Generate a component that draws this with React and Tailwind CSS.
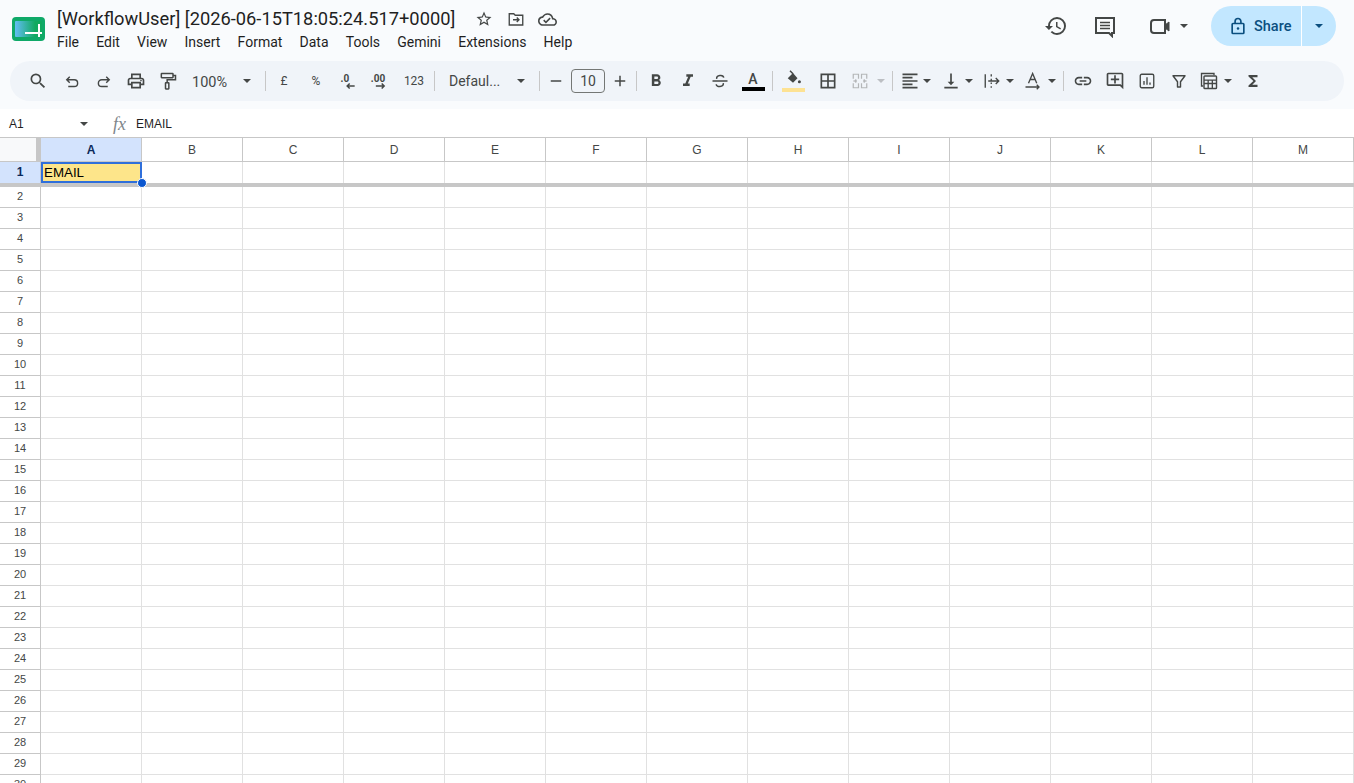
import {
  MdSearch, MdOutlinePrint, MdHistory, MdStarBorder, MdOutlineCloudDone,
  MdFormatBold, MdFormatItalic, MdBorderAll, MdFormatAlignLeft,
  MdVerticalAlignBottom, MdLink, MdOutlineAddComment, MdFunctions, MdAdd, MdRemove,
} from 'react-icons/md';

const menus = ['File', 'Edit', 'View', 'Insert', 'Format', 'Data', 'Tools', 'Gemini', 'Extensions', 'Help'];
const columns = ['A', 'B', 'C', 'D', 'E', 'F', 'G', 'H', 'I', 'J', 'K', 'L', 'M'];
const rows = Array.from({ length: 29 }, (_, i) => i + 2);

function Svg({ children, className = 'w-5 h-5 text-[#444746]' }) {
  return (
    <svg viewBox="0 0 24 24" fill="none" stroke="currentColor" strokeWidth="2" className={className}>
      {children}
    </svg>
  );
}

function Btn({ children, className = 'w-8' }) {
  return <div className={`h-8 flex items-center justify-center shrink-0 text-[#444746] ${className}`}>{children}</div>;
}

function Caret({ className = 'w-[18px]', color = 'border-t-[#444746]' }) {
  return (
    <div className={`h-8 flex items-center justify-center shrink-0 ${className}`}>
      <div className={`w-0 h-0 border-x-[4px] border-x-transparent border-t-[4px] ${color}`} />
    </div>
  );
}

function Sep({ className = '' }) {
  return <div className={`w-px h-5 bg-[#c7c7c7] shrink-0 ${className}`} />;
}

function Toolbar() {
  return (
    <div className="mx-[10px] h-10 rounded-[20px] bg-[#f0f4f9] flex items-center pl-3 font-['Roboto',sans-serif]">
      <Btn><MdSearch className="w-5 h-5" /></Btn>
      <Btn className="w-8 ml-0.5">
        <Svg className="w-[18px] h-[18px] mt-0.5">
          <path d="M9 5 5 9l4 4M5 9h10a4.5 4.5 0 0 1 0 9H7" strokeWidth="1.9" />
        </Svg>
      </Btn>
      <Btn>
        <Svg className="w-[18px] h-[18px] mt-0.5">
          <path d="M15 5l4 4-4 4M19 9H9a4.5 4.5 0 0 0 0 9h8" strokeWidth="1.9" />
        </Svg>
      </Btn>
      <Btn><MdOutlinePrint className="w-5 h-5" /></Btn>
      <Btn>
        <Svg className="w-5 h-5">
          <rect x="4" y="3" width="14" height="5" rx="0.5" strokeWidth="1.8" />
          <path d="M18 5.5h3v5H11v3.5" strokeWidth="1.8" />
          <rect x="9" y="14" width="4" height="7.5" rx="0.5" strokeWidth="1.8" />
        </Svg>
      </Btn>
      <div className="w-[47px] ml-2 mt-[3px] text-[14.5px] text-[#444746] shrink-0">100%</div>
      <Caret className="w-[16px]" />
      <Sep className="ml-[10px]" />
      <Btn className="w-8 ml-[2px]"><span className="text-[12px]">£</span></Btn>
      <Btn className="w-8"><span className="text-[12px]">%</span></Btn>
      <Btn>
        <Svg>
          <text x="3" y="13" fontSize="12" fontWeight="700" fill="currentColor" stroke="none" fontFamily="Roboto">.0</text>
          <path d="M20 18H11M14 15l-3 3 3 3" strokeWidth="1.8" />
        </Svg>
      </Btn>
      <Btn>
        <Svg>
          <text x="1" y="13" fontSize="12" fontWeight="700" fill="currentColor" stroke="none" fontFamily="Roboto">.00</text>
          <path d="M7 18h10M14 15l3 3-3 3" strokeWidth="1.8" />
        </Svg>
      </Btn>
      <Btn className="w-8 ml-0.5"><span className="text-[12px]">123</span></Btn>
      <Sep className="ml-1" />
      <div className="w-[67px] ml-[14px] mt-[1px] text-[14px] text-[#444746] shrink-0">Defaul...</div>
      <Caret className="w-[10px]" />
      <Sep className="ml-[13px]" />
      <Btn className="w-8"><MdRemove className="w-[18px] h-[18px]" /></Btn>
      <div className="w-[34px] h-6 -ml-[1px] border border-[#747775] rounded-[4px] flex items-center justify-center text-[14px] text-[#444746] shrink-0">10</div>
      <Btn className="w-[30px]"><MdAdd className="w-[18px] h-[18px]" /></Btn>
      <Sep className="ml-[1px]" />
      <Btn className="w-8 ml-[3px]"><MdFormatBold className="w-5 h-5" /></Btn>
      <Btn><MdFormatItalic className="w-5 h-5" /></Btn>
      <Btn>
        <Svg className="w-5 h-5">
          <path d="M3 12h18M8 9.5C7.5 4.5 16 4 16.5 8M16 14.5c.5 5-8.5 5.500-8.500 1.500" strokeWidth="1.8" />
        </Svg>
      </Btn>
      <div className="w-8 h-8 flex flex-col items-center justify-center shrink-0 ml-[1px]">
        <span className="text-[14px] leading-[15px] text-[#444746] font-medium">A</span>
        <div className="w-[23px] h-1 bg-black" />
      </div>
      <Sep className="ml-[3px]" />
      <div className="w-8 h-8 flex flex-col items-center justify-center shrink-0 ml-[4px]">
        <Svg className="w-[18px] h-[18px] text-[#444746]">
          <path d="M5 11 12 4l6 7-6 6z" fill="currentColor" stroke="none" />
          <path d="M8 1l4 4" strokeWidth="2" />
          <circle cx="20.5" cy="15.5" r="2" fill="currentColor" stroke="none" />
        </Svg>
        <div className="w-[23px] h-1 bg-[#fde293]" />
      </div>
      <Btn className="w-8 ml-[3px]"><MdBorderAll className="w-5 h-5" /></Btn>
      <Btn className="w-8">
        <Svg className="w-[18px] h-[18px] text-[#b4b6b8]">
          <path d="M3 9V3h7v6M3 15v6h7v-6M14 9V3h7v6M14 15v6h7v-6M3 12h5M16 12h5M7 10l-2 2 2 2M17 10l2 2-2 2" strokeWidth="1.6" />
        </Svg>
      </Btn>
      <Caret className="w-[10px] opacity-30" />
      <Sep className="ml-[6px]" />
      <Btn className="w-[25px] ml-[4px]"><MdFormatAlignLeft className="w-5 h-5" /></Btn>
      <Caret className="w-[10px]" />
      <Btn className="w-[27px] ml-[5px]"><MdVerticalAlignBottom className="w-5 h-5" /></Btn>
      <Caret className="w-[10px]" />
      <Btn className="w-[26px] ml-[5px]">
        <Svg className="w-[18px] h-[18px]">
          <path d="M3 3v18M11 3v3M11 9v2M11 14v2M11 19v2M7 12h14M17 8l4 4-4 4" strokeWidth="1.8" />
        </Svg>
      </Btn>
      <Caret className="w-[10px]" />
      <Btn className="w-7 ml-[4px]">
        <Svg className="w-[18px] h-[18px]">
          <path d="M6 15 11.500 2l5.500 13M8 10h7M2 20h18M17 17l3 3-3 3" strokeWidth="1.8" />
        </Svg>
      </Btn>
      <Caret className="w-[10px]" />
      <Sep className="ml-[6px]" />
      <Btn className="w-8 ml-[3px]"><MdLink className="w-5 h-5" /></Btn>
      <Btn><MdOutlineAddComment className="w-5 h-5" /></Btn>
      <Btn>
        <Svg className="w-[18px] h-[18px]">
          <rect x="3" y="3" width="18" height="18" rx="2" strokeWidth="1.8" />
          <path d="M8 17v-5M12 17V7M16 17v-3" strokeWidth="1.8" />
        </Svg>
      </Btn>
      <Btn>
        <Svg className="w-[18px] h-[18px]">
          <path d="M4 5h16l-6 8v7h-4v-7z" strokeWidth="1.9" strokeLinejoin="round" />
        </Svg>
      </Btn>
      <Btn className="w-7">
        <Svg className="w-5 h-5">
          <path d="M5 18H3V3h15v2" strokeWidth="1.6" />
          <rect x="6" y="6" width="15" height="15" rx="1" strokeWidth="1.7" />
          <path d="M6 11h15M6 15h15M11 11v10M16 11v10" strokeWidth="1.6" />
        </Svg>
      </Btn>
      <Caret className="w-[10px]" />
      <Btn className="w-8 ml-[4px]"><MdFunctions className="w-[18px] h-[18px]" /></Btn>
    </div>
  );
}

export default function App() {
  return (
    <div className="w-[1354px] h-[783px] overflow-hidden bg-[#f9fbfd] flex flex-col">
      {/* title bar */}
      <div className="h-[61px] shrink-0 flex pl-3">
        <svg viewBox="0 0 33 24" className="w-[33px] h-6 mt-[17px] shrink-0">
          <defs>
            <linearGradient id="logo" x1="0" y1="0" x2="1" y2="0">
              <stop offset="0" stopColor="#62bdf4" />
              <stop offset="0.75" stopColor="#10a95f" />
            </linearGradient>
          </defs>
          <rect width="33" height="24" rx="4" fill="#0fa968" />
          <rect x="3" y="4" width="27" height="16" rx="1" fill="url(#logo)" />
          <path d="M13 16h17M27 7v13" stroke="#fff" strokeWidth="2" />
        </svg>
        <div className="ml-3 font-['Roboto',sans-serif] text-[#1f1f1f]">
          <div className="flex items-center h-[22px] mt-2">
            <span className="text-[18.3px] leading-[22px] whitespace-nowrap">[WorkflowUser] [2026-06-15T18:05:24.517+0000]</span>
            <MdStarBorder className="w-[18px] h-[18px] ml-[20px] text-[#444746]" />
            <Svg className="w-[18px] h-[18px] ml-[14px] text-[#444746]">
              <path d="M3 20V5h6l2 2h10v13z" strokeWidth="1.8" />
              <path d="M8 13h8M13 10l3 3-3 3" strokeWidth="1.8" />
            </Svg>
            <MdOutlineCloudDone className="w-[19px] h-[19px] ml-[13px] text-[#444746]" />
          </div>
          <div className="flex gap-[17.2px] mt-[2px] text-[14px] leading-5">
            {menus.map((m) => (
              <span key={m}>{m}</span>
            ))}
          </div>
        </div>
        <div className="ml-auto flex items-center h-10 mt-[6px] pr-[18px] text-[#444746]">
          <MdHistory className="w-6 h-6" />
          <Svg className="w-6 h-6 ml-[25px]">
            <path d="M3 4h18v15h-2v3l-3-3H3z" strokeWidth="2" />
            <path d="M7 8.5h10M7 11.500h10M7 14.500h10" strokeWidth="1.6" />
          </Svg>
          <Svg className="w-6 h-6 ml-[31px]">
            <path d="M3 9a3 3 0 0 1 3-3h11v13H6a3 3 0 0 1-3-3z" strokeWidth="2" />
            <path d="M17 11l4-3v9l-4-3z" fill="currentColor" strokeWidth="1" />
          </Svg>
          <Caret className="w-[10px] ml-[7px]" />
          <div className="ml-[22px] w-[125px] h-10 rounded-[20px] bg-[#c2e7ff] flex items-center text-[#0b4f7f]">
            <Svg className="w-5 h-5 ml-[17px]">
              <rect x="5" y="9" width="14" height="12" rx="1" strokeWidth="2" />
              <path d="M8.500 9V6.500a3.500 3.500 0 0 1 7 0V9" strokeWidth="2" />
              <circle cx="12" cy="15" r="1.500" fill="currentColor" stroke="none" />
            </Svg>
            <span className="ml-[6px] mt-[2px] w-[44px] text-[14.5px] font-medium font-['Roboto',sans-serif]">Share</span>
            <div className="w-px h-10 ml-[3px] bg-white" />
            <Caret className="w-[34px]" color="border-t-[#0b4f7f]" />
          </div>
        </div>
      </div>

      <Toolbar />

      {/* formula bar */}
      <div className="mt-2 h-7 shrink-0 bg-white flex items-center pt-[1px] font-['Liberation_Sans',sans-serif] text-[12px] text-[#1f1f1f]">
        <span className="ml-[9px] w-[71px]">A1</span>
        <div className="w-0 h-0 border-x-[4px] border-x-transparent border-t-[4px] border-t-[#444746]" />
        <span className="ml-[25px] w-[23px] text-[18px] leading-none italic text-[#80868b] font-['Liberation_Serif',serif]">fx</span>
        <span>EMAIL</span>
      </div>

      {/* sheet */}
      <div className="flex-1 bg-white font-['Liberation_Sans',sans-serif] overflow-hidden">
        <div className="flex h-[25px] border-y border-[#c7c7c7]">
          <div className="w-[41px] shrink-0 flex">
            <div className="w-9 bg-[#f8f9fa]" />
            <div className="w-[5px] bg-[#c7c7c7]" />
          </div>
          {columns.map((c, i) => (
            <div
              key={c}
              className={`w-[101px] shrink-0 border-r border-[#c7c7c7] flex items-center justify-center text-[12px] ${i === 0 ? 'bg-[#d3e3fd] font-bold text-[#0b2a5b]' : 'text-[#444746]'}`}
            >
              {c}
            </div>
          ))}
        </div>
        <div className="flex h-[21px]">
          <div className="w-[41px] shrink-0 border-r border-[#c7c7c7] bg-[#d3e3fd] flex items-center justify-center pb-0.5 text-[12px] font-bold text-[#0b2a5b]">1</div>
          <div className="w-[101px] shrink-0 relative bg-[#fde58a] border-2 border-[#2f6fdb] pl-[1px] flex items-center text-[13.33px] text-black leading-none">
            EMAIL
            <div className="absolute -right-[7px] -bottom-[7px] w-2 h-2 rounded-full bg-[#0b57d0] border border-white box-content z-10" />
          </div>
          {columns.slice(1).map((c) => (
            <div key={c} className="w-[101px] shrink-0 border-r border-[#e1e1e1]" />
          ))}
        </div>
        <div className="h-1 bg-[#c7c7c7]" />
        {rows.map((r) => (
          <div key={r} className="flex h-[21px]">
            <div className="w-[41px] shrink-0 border-r border-b border-[#c7c7c7] flex items-center justify-center pb-0.5 text-[11px] text-[#444746]">{r}</div>
            {columns.map((c) => (
              <div key={c} className="w-[101px] shrink-0 border-r border-b border-[#e1e1e1]" />
            ))}
          </div>
        ))}
      </div>
    </div>
  );
}
